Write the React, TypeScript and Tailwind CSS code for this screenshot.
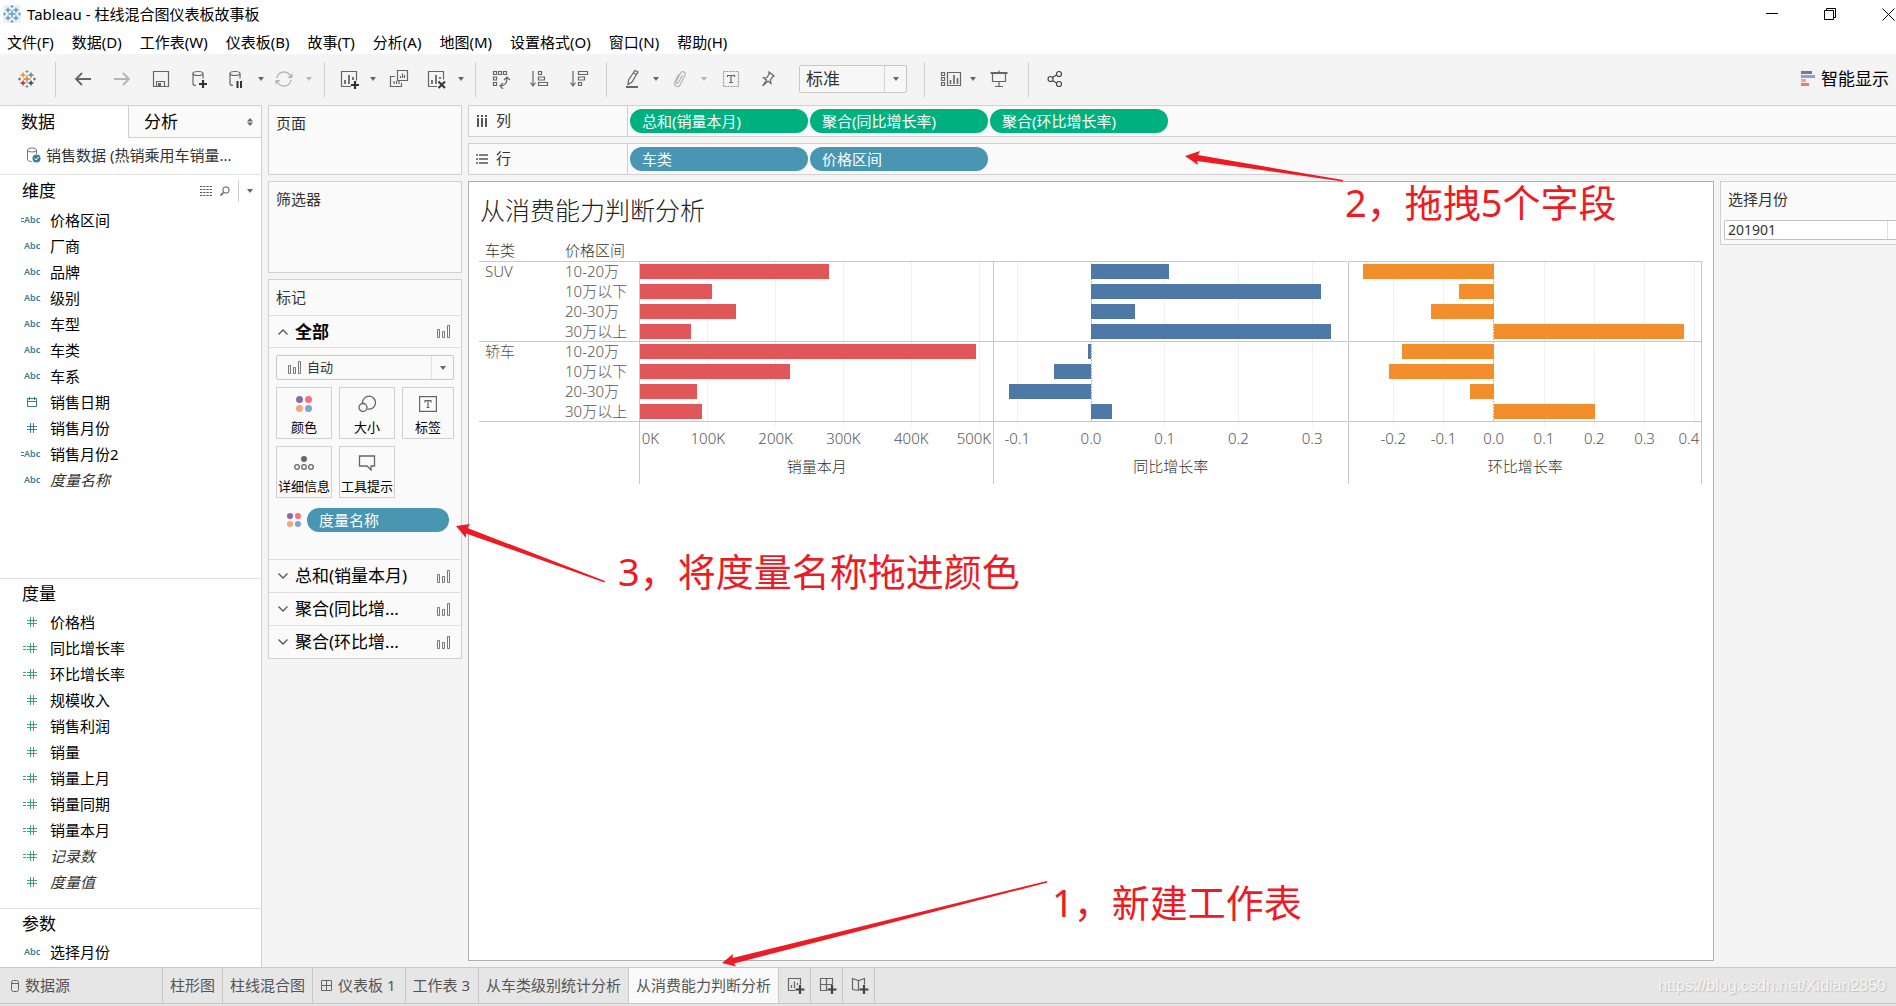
import React from "react";

type Measure = {
  title: string;
  color: string;
  min: number;
  max: number;
  ticks: { value: number; label: string; anchor?: "start" | "end" }[];
  values: number[];
  zeroLine: boolean;
};

const measures: Measure[] = [
  {
    title: "销量本月",
    color: "#e15759",
    min: 0,
    max: 521,
    zeroLine: false,
    ticks: [
      { value: 0, label: "0K", anchor: "start" },
      { value: 100, label: "100K" },
      { value: 200, label: "200K" },
      { value: 300, label: "300K" },
      { value: 400, label: "400K" },
      { value: 500, label: "500K", anchor: "end" },
    ],
    values: [278, 106, 141, 75, 495, 221, 84, 91],
  },
  {
    title: "同比增长率",
    color: "#4e79a7",
    min: -0.1316,
    max: 0.3477,
    zeroLine: true,
    ticks: [
      { value: -0.1, label: "-0.1" },
      { value: 0, label: "0.0" },
      { value: 0.1, label: "0.1" },
      { value: 0.2, label: "0.2" },
      { value: 0.3, label: "0.3" },
    ],
    values: [0.106, 0.312, 0.0597, 0.3257, -0.0041, -0.0502, -0.1113, 0.0285],
  },
  {
    title: "环比增长率",
    color: "#f28e2b",
    min: -0.288,
    max: 0.413,
    zeroLine: true,
    ticks: [
      { value: -0.2, label: "-0.2" },
      { value: -0.1, label: "-0.1" },
      { value: 0, label: "0.0" },
      { value: 0.1, label: "0.1" },
      { value: 0.2, label: "0.2" },
      { value: 0.3, label: "0.3" },
      { value: 0.4, label: "0.4", anchor: "end" },
    ],
    values: [-0.2605, -0.07, -0.1255, 0.3785, -0.183, -0.209, -0.0482, 0.202],
  },
];

const groups = [
  { name: "SUV", rows: ["10-20万", "10万以下", "20-30万", "30万以上"] },
  { name: "轿车", rows: ["10-20万", "10万以下", "20-30万", "30万以上"] },
];

function BarPanel({ m }: { m: Measure }) {
  const pct = (v: number) => ((v - m.min) / (m.max - m.min)) * 100;
  const zero = pct(0);
  return (
    <svg className="block h-[223px] w-full overflow-visible" role="img" aria-label={m.title}>
      <g shapeRendering="crispEdges">
        {m.ticks
          .filter((t) => t.value !== 0)
          .map((t) => (
            <line key={t.label} x1={`${pct(t.value)}%`} x2={`${pct(t.value)}%`} y1="0" y2="165" stroke="#f0f0f0" />
          ))}
        {m.zeroLine && (
          <line x1={`${zero}%`} x2={`${zero}%`} y1="2" y2="160" stroke="#b8b8b8" strokeDasharray="2 1" />
        )}
        {[0, 80, 160].map((y) => (
          <rect key={y} x="0" y={y} width="100%" height="1" fill="#c8c8c8" />
        ))}
        {m.values.map((v, i) => (
          <rect
            key={i}
            x={`${Math.min(zero, pct(v))}%`}
            y={3 + i * 20}
            width={`${Math.abs(pct(v) - zero)}%`}
            height="15"
            fill={m.color}
          />
        ))}
      </g>
      <g fontSize="15" fill="#555">
        {m.ticks.map((t) => (
          <text
            key={t.label}
            x={t.anchor === "start" ? "0.5%" : t.anchor === "end" ? "99.4%" : `${pct(t.value)}%`}
            y="183"
            textAnchor={t.anchor ?? "middle"}
          >
            {t.label}
          </text>
        ))}
        <text x="50%" y="211" textAnchor="middle" fill="#333">
          {m.title}
        </text>
      </g>
    </svg>
  );
}

function TableauMark({ mono = false }: { mono?: boolean }) {
  const c = (s: string) => (mono ? "#5b9bc0" : s);
  return (
    <svg width="18" height="18" viewBox="0 0 18 18" fill="none" strokeWidth="1.4" aria-hidden="true">
      {mono && <path d="M0 0h18v18H0z" fill="#eef1f3" />}
      <path d="M9 5.5v7M5.5 9h7" stroke={c("#e8762d")} />
      <path d="M5 2.5v5M2.5 5h5" stroke={c("#eb9129")} />
      <path d="M13 2.5v5M10.500 5h5" stroke={c("#59879b")} />
      <path d="M5 10.500v5M2.500 13h5" stroke={c("#c72037")} />
      <path d="M13 10.500v5M10.500 13h5" stroke={c("#1f457e")} />
      <path d="M9 0v3M7.500 1.500h3M9 15v3M7.500 16.500h3" stroke={c("#7199a6")} strokeWidth="1" />
      <path d="M1.500 7.500v3M0 9h3M16.500 7.500v3M15 9h3" stroke={c("#5b6591")} strokeWidth="1" />
    </svg>
  );
}

function Caret({ light = false }: { light?: boolean }) {
  return (
    <svg width="6" height="4" viewBox="0 0 6 4" aria-hidden="true">
      <path d="M0 0h6L3 4z" fill={light ? "#b5b5b5" : "#666"} />
    </svg>
  );
}

function ToolButton({ label, className, children }: { label: string; className: string; children: React.ReactNode }) {
  return (
    <button type="button" aria-label={label} className={"flex h-9 shrink-0 items-center justify-center " + className}>
      {children}
    </button>
  );
}

function Sep() {
  return <div className="mx-[7px] h-[35px] w-px shrink-0 bg-[#cfcfcf]" />;
}

function I({ children, w = 20, color = "#666" }: { children: React.ReactNode; w?: number; color?: string }) {
  return (
    <svg width={w} height="20" viewBox={`0 0 ${w} 20`} fill="none" stroke={color} strokeWidth="1.2" aria-hidden="true">
      {children}
    </svg>
  );
}

function Toolbar() {
  return (
    <div className="flex h-[51px] items-center bg-[#f4f4f4] pb-px">
      <ToolButton label="起始页" className="w-12 pl-[6px]">
        <TableauMark />
      </ToolButton>
      <Sep />
      <ToolButton label="后退" className="w-[39px]">
        <I>
          <path d="M18 10H3M9 4l-6 6 6 6" strokeWidth="1.800" />
        </I>
      </ToolButton>
      <ToolButton label="前进" className="w-[39px]">
        <I color="#b5b5b5">
          <path d="M2 10h15M11 4l6 6-6 6" strokeWidth="1.800" />
        </I>
      </ToolButton>
      <ToolButton label="保存" className="w-[39px]">
        <I>
          <path d="M2.500 2.500h15v15h-15zM5.500 17.500v-5h8v5" />
          <path d="M7 14h3v3H7z" fill="#666" stroke="none" />
        </I>
      </ToolButton>
      <ToolButton label="新建数据源" className="w-10">
        <I>
          <ellipse cx="8" cy="4.500" rx="5" ry="2" />
          <path d="M3 4.500v10c0 1 1 2 3 2M13 4.500v5" />
          <path d="M13 11v8M9 15h8" stroke="#333" strokeWidth="2.200" />
        </I>
      </ToolButton>
      <ToolButton label="暂停自动更新" className="w-[34px]">
        <I>
          <ellipse cx="8" cy="4.500" rx="5" ry="2" />
          <path d="M3 4.500v10c0 1 1 2 3 2M13 4.500v5" />
          <path d="M10.500 12v7M14 12v7" stroke="#333" strokeWidth="2" />
        </I>
      </ToolButton>
      <ToolButton label="更新选项" className="w-[14px]">
        <Caret />
      </ToolButton>
      <ToolButton label="刷新" className="w-8">
        <I color="#b5b5b5">
          <path d="M3 9a7 7 0 0 1 13-2.500M17 11a7 7 0 0 1-13 2.500" strokeWidth="1.400" />
          <path d="M18.500 4v5h-5zM1.500 16v-5h5z" fill="#b5b5b5" stroke="none" />
        </I>
      </ToolButton>
      <ToolButton label="刷新选项" className="w-[17px]">
        <Caret light />
      </ToolButton>
      <Sep />
      <ToolButton label="新建工作表" className="w-[34px]">
        <I>
          <path d="M12 17.500H2.500v-15h15v9" />
          <path d="M6 15v-4M10 15V6M14 11V8" strokeWidth="1.800" />
          <path d="M16 12v8M12 16h8" stroke="#333" strokeWidth="2.200" />
        </I>
      </ToolButton>
      <ToolButton label="新建选项" className="w-[14px]">
        <Caret />
      </ToolButton>
      <ToolButton label="复制" className="w-[38px]">
        <I>
          <path d="M8.500 1.500h10v10h-10zM6 7.500H1.500v10h11V14M11.500 9V7M13.500 9V4.500M15.500 9V6M5 15v-3M7.500 15v-3M10 15v-3" />
        </I>
      </ToolButton>
      <ToolButton label="清除" className="w-9">
        <I>
          <path d="M11 17.500H2.500v-15h15v8" />
          <path d="M6 15v-4M10 15V6M14 10V8" strokeWidth="1.800" />
          <path d="M12.500 12.500l6.500 6.500M19 12.500L12.500 19" stroke="#333" strokeWidth="2" />
        </I>
      </ToolButton>
      <ToolButton label="清除选项" className="w-[14px]">
        <Caret />
      </ToolButton>
      <Sep />
      <ToolButton label="交换行和列" className="w-9">
        <I>
          <path d="M2.500 2.500h3v3h-3zM7.500 2.500h3v3h-3zM12.500 2.500h3v3h-3zM2.500 8h3v3h-3zM2.500 13.500h3v3h-3zM9 17c5 0 7-3 7-8M12 14l-3 3 3 3M13 11l3-3 3 3" />
        </I>
      </ToolButton>
      <ToolButton label="升序排序" className="w-10">
        <I>
          <path d="M4 2v14M1.500 13.500L4 17l2.500-3.500" />
          <path d="M9.500 2.500h3v3h-3zM9.500 8h6v3h-6zM9.500 13.500h9v3h-9z" />
        </I>
      </ToolButton>
      <ToolButton label="降序排序" className="w-10">
        <I>
          <path d="M4 2v14M1.500 13.500L4 17l2.500-3.500" />
          <path d="M9.500 2.500h9v3h-9zM9.500 8h6v3h-6zM9.500 13.500h3v3h-3z" />
        </I>
      </ToolButton>
      <Sep />
      <ToolButton label="突出显示" className="ml-px w-[34px]">
        <I>
          <path d="M13 1.500l3 1.500-6 10-4 2.500.500-4.500zM11.500 4l3 1.500" />
          <path d="M4 18h12" strokeWidth="2" />
        </I>
      </ToolButton>
      <ToolButton label="突出显示选项" className="w-[14px]">
        <Caret />
      </ToolButton>
      <ToolButton label="组成员" className="w-[34px]">
        <I color="#b5b5b5">
          <path d="M12.500 6l-4 7.500c-.8 1.500-3 .500-2.200-1.200L10.500 4c1.300-2.600 5.700-1 4.500 2l-5 10c-1.700 3-6.500 1-5.300-2.500L8.500 5.500" />
        </I>
      </ToolButton>
      <ToolButton label="组选项" className="w-[14px]">
        <Caret light />
      </ToolButton>
      <ToolButton label="显示标记标签" className="w-10">
        <I>
          <path d="M2.500 2.500h15v15h-15z" strokeDasharray="2 1" stroke="#999" />
          <path d="M6.500 8V6.500h7V8M10 6.500v7M8 13.500h4" />
        </I>
      </ToolButton>
      <ToolButton label="固定轴" className="w-[34px]">
        <I>
          <path d="M11 3l5 4-1.500 1-2 3 .500 3.500-3-2.500-5.500 5 4-6L5.500 9l3.500-.500L11 5z" />
        </I>
      </ToolButton>
      <div className="relative ml-[14px] mr-[10px] w-[108px] shrink-0">
        <select
          aria-label="适合"
          className="block h-7 w-full appearance-none rounded-[2px] border border-[#c8c8c8] bg-[#f7f7f7] pl-[6px] text-[17px] text-[#333]"
        >
          <option>标准</option>
        </select>
        <div className="pointer-events-none absolute inset-y-px right-px flex w-[22px] items-center justify-center border-l border-[#d4d4d4]">
          <Caret />
        </div>
      </div>
      <Sep />
      <ToolButton label="显示卡" className="w-[37px]">
        <I w={22}>
          <path d="M1.500 3.500h3v3h-3zM1.500 8.500h3v3h-3zM1.500 13.500h3v3h-3zM7.500 3.500h13v13h-13z" />
          <path d="M10.500 15v-4M14 15V6M17.500 15V9" strokeWidth="1.600" />
        </I>
      </ToolButton>
      <ToolButton label="卡选项" className="w-2">
        <Caret />
      </ToolButton>
      <ToolButton label="演示模式" className="w-[44px]">
        <I>
          <path d="M3.500 4v8.500h13V4M10 12.500V17M6 17.500h8M10 1.500V4" />
          <path d="M1.500 4h17" strokeWidth="2" />
        </I>
      </ToolButton>
      <Sep />
      <ToolButton label="共享" className="w-[38px]">
        <I color="#444">
          <circle cx="5.500" cy="10" r="2.500" />
          <circle cx="14" cy="5" r="2.500" />
          <circle cx="14" cy="15" r="2.500" />
          <path d="M7.500 8.500l4-2.500M7.500 11.500l4 2.500" />
        </I>
      </ToolButton>
      <button type="button" className="ml-auto mr-[7px] flex items-center gap-[6px] text-[17px] text-black">
        <svg width="14" height="16" viewBox="0 0 14 16" aria-hidden="true">
          <path d="M0 0h11v3H0z" fill="#8a6d9a" />
          <path d="M0 4h14v3H0z" fill="#7fa5d0" />
          <path d="M0 8h5v3H0z" fill="#f4a67c" />
          <path d="M0 12h8v3H0z" fill="#fb6f80" />
        </svg>
        智能显示
      </button>
    </div>
  );
}

type Kind = "abc" | "date" | "num";
type Field = { name: string; kind: Kind; calc?: boolean; italic?: boolean };

const dimensions: Field[] = [
  { name: "价格区间", kind: "abc", calc: true },
  { name: "厂商", kind: "abc" },
  { name: "品牌", kind: "abc" },
  { name: "级别", kind: "abc" },
  { name: "车型", kind: "abc" },
  { name: "车类", kind: "abc" },
  { name: "车系", kind: "abc" },
  { name: "销售日期", kind: "date" },
  { name: "销售月份", kind: "num" },
  { name: "销售月份2", kind: "abc", calc: true },
  { name: "度量名称", kind: "abc", italic: true },
];

const measureFields: Field[] = [
  { name: "价格档", kind: "num" },
  { name: "同比增长率", kind: "num", calc: true },
  { name: "环比增长率", kind: "num", calc: true },
  { name: "规模收入", kind: "num" },
  { name: "销售利润", kind: "num" },
  { name: "销量", kind: "num" },
  { name: "销量上月", kind: "num", calc: true },
  { name: "销量同期", kind: "num", calc: true },
  { name: "销量本月", kind: "num", calc: true },
  { name: "记录数", kind: "num", calc: true, italic: true },
  { name: "度量值", kind: "num", italic: true },
];

function FieldList({ fields, green = false }: { fields: Field[]; green?: boolean }) {
  return (
    <ul>
      {fields.map((f) => (
        <li key={f.name} className="flex h-[26px] items-center">
          <span
            className={
              "flex w-[50px] shrink-0 items-center pr-[9px] " + (green ? "text-[#3fa37c]" : "text-[#3a7c9c]")
            }
          >
            <span className={"flex justify-end " + (f.kind === "abc" ? "w-6" : "w-[26px]")}>
              {f.calc && (
                <svg width="3" height="4" viewBox="0 0 3 4" aria-hidden="true">
                  <path d="M0 .5h3M0 3.500h3" stroke="currentColor" />
                </svg>
              )}
            </span>
            {f.kind === "abc" && <span className="text-[9px] font-semibold">Abc</span>}
            {f.kind === "num" && (
              <svg width="11" height="12" viewBox="0 0 11 12" aria-hidden="true">
                <path d="M4.500 1v10M7.500 1v10M1 4.500h10M1 7.500h10" stroke="currentColor" />
              </svg>
            )}
            {f.kind === "date" && (
              <svg width="11" height="10" viewBox="0 0 11 10" aria-hidden="true">
                <path d="M1.500 1.500h9v8h-9zM1.500 4.500h9M3.500 0v3M8.500 0v3" fill="none" stroke="currentColor" />
              </svg>
            )}
          </span>
          <span className={f.italic ? "text-[15px] italic text-[#333]" : "text-[15px] text-black"}>{f.name}</span>
        </li>
      ))}
    </ul>
  );
}

function DataPane() {
  return (
    <aside className="flex w-[262px] shrink-0 flex-col border-r border-t border-[#d0d0d0] bg-white">
      <div className="flex h-8 text-[17px] text-black">
        <button type="button" className="w-32 pl-[21px] text-left">
          数据
        </button>
        <button
          type="button"
          className="flex flex-1 items-center justify-between border-b border-l border-[#d0d0d0] bg-[#fafafa] pl-[15px] pr-2"
        >
          分析
          <svg width="6" height="8" viewBox="0 0 6 8" aria-hidden="true">
            <path d="M0 3.500h6L3 0zM0 4.500h6L3 8z" fill="#666" />
          </svg>
        </button>
      </div>
      <div className="flex h-[37px] items-center gap-[5px] border-b border-[#e0e0e0] pb-[2px] pl-[26px] text-[15px] text-[#333]">
        <svg width="15" height="16" viewBox="0 0 15 16" fill="none" aria-hidden="true">
          <ellipse cx="6" cy="3" rx="4.500" ry="2" stroke="#777" />
          <path d="M1.500 3v9.500c0 1 1.500 2 4 2M10.500 3v4" stroke="#777" />
          <circle cx="10.500" cy="11.500" r="4" fill="#3a7fa0" />
          <path d="M8.500 11.500l1.500 1.500 2.500-3" stroke="#fff" />
        </svg>
        销售数据 (热销乘用车销量...
      </div>
      <section className="flex-1 border-b border-[#e0e0e0]">
        <div className="flex h-8 items-center pl-[22px] pr-2">
          <h2 className="flex-1 text-[17px] text-black">维度</h2>
          <button type="button" aria-label="查看数据" className="mr-2">
            <svg width="12" height="10" viewBox="0 0 12 10" aria-hidden="true">
              <path d="M0 .5h12M0 3.500h12M0 6.500h12M0 9.500h12" stroke="#555" strokeDasharray="2.250 1" />
            </svg>
          </button>
          <button type="button" aria-label="查找字段" className="mr-2">
            <svg width="10" height="10" viewBox="0 0 10 10" fill="none" stroke="#555" aria-hidden="true">
              <circle cx="6" cy="4" r="3.200" />
              <path d="M3.500 6.500L.5 9.500" strokeWidth="1.500" />
            </svg>
          </button>
          <div className="mr-2 h-[22px] w-px bg-[#d0d0d0]" />
          <button type="button" aria-label="维度菜单" className="py-1">
            <Caret />
          </button>
        </div>
        <FieldList fields={dimensions} />
      </section>
      <section className="border-b border-[#e0e0e0] pb-[13px]">
        <h2 className="flex h-[30px] items-center pl-[22px] text-[17px] text-black">度量</h2>
        <FieldList fields={measureFields} green />
      </section>
      <section className="pb-[2px]">
        <h2 className="flex h-[30px] items-center pl-[22px] text-[17px] text-black">参数</h2>
        <FieldList fields={[{ name: "选择月份", kind: "abc" }]} />
      </section>
    </aside>
  );
}

function BarsIcon() {
  return (
    <svg width="14" height="13" viewBox="0 0 14 13" fill="none" stroke="#777" aria-hidden="true">
      <path d="M.5 4.500h2v8h-2zM5.500 6.500h2v6h-2zM10.500 .5h2v12h-2z" />
    </svg>
  );
}

function Dots({ size = 16 }: { size?: number }) {
  return (
    <svg width={size} height={size} viewBox="0 0 16 16" aria-hidden="true">
      <circle cx="3.500" cy="3.500" r="3.500" fill="#8a6d9a" />
      <circle cx="12.500" cy="3.500" r="3.500" fill="#fb6f80" />
      <circle cx="3.500" cy="12.500" r="3.500" fill="#f4a67c" />
      <circle cx="12.500" cy="12.500" r="3.500" fill="#7fa5d0" />
    </svg>
  );
}

function MarkButton({ label, narrow = false, children }: { label: string; narrow?: boolean; children: React.ReactNode }) {
  return (
    <button
      type="button"
      className={
        "flex h-[52px] flex-col items-center justify-between whitespace-nowrap border border-[#d0d0d0] bg-[#fafafa] pb-px pt-[6px] text-[13px] leading-[20px] text-black " +
        (narrow ? "w-[52px]" : "w-14")
      }
    >
      <span className="flex h-5 items-center">{children}</span>
      {label}
    </button>
  );
}

function MarksColumn() {
  return (
    <div className="ml-[6px] flex w-[194px] shrink-0 flex-col gap-[6px] text-[15px] text-[#333]">
      <section className="h-[70px] border border-[#d0d0d0] bg-[#fafafa] pl-[7px]">
        <h2 className="flex h-9 items-center pb-[2px]">页面</h2>
      </section>
      <section className="h-[92px] border border-[#d0d0d0] bg-[#fafafa] pl-[7px]">
        <h2 className="flex h-9 items-center pb-[2px]">筛选器</h2>
      </section>
      <section className="border border-[#d0d0d0] bg-[#fafafa]">
        <h2 className="flex h-9 items-center border-b border-[#e0e0e0] pb-px pl-[7px]">标记</h2>
        <button
          type="button"
          className="flex h-8 w-full items-center border-b border-[#e0e0e0] pl-[9px] pr-[10px] text-[17px] font-bold text-black"
        >
          <svg width="10" height="6" viewBox="0 0 10 6" fill="none" stroke="#555" strokeWidth="1.300" aria-hidden="true">
            <path d="M.5 5.500L5 1l4.500 4.500" />
          </svg>
          <span className="flex-1 pl-[7px] text-left">全部</span>
          <BarsIcon />
        </button>
        <div className="px-[7px] pb-[27px] pt-[7px]">
          <div className="relative w-[178px]">
            <select
              aria-label="标记类型"
              className="block h-[25px] w-full appearance-none rounded-[2px] border border-[#c8c8c8] bg-[#fafafa] pl-[30px] text-[13px] text-[#333]"
            >
              <option>自动</option>
            </select>
            <div className="pointer-events-none absolute inset-y-px left-3 flex items-center">
              <BarsIcon />
            </div>
            <div className="pointer-events-none absolute inset-y-px right-px flex w-[22px] items-center justify-center border-l border-[#e0e0e0]">
              <Caret />
            </div>
          </div>
          <div className="mt-[7px] flex flex-wrap gap-[7px]">
            <MarkButton label="颜色">
              <Dots />
            </MarkButton>
            <MarkButton label="大小">
              <svg width="18" height="18" viewBox="0 0 18 18" fill="none" stroke="#666" strokeWidth="1.300" aria-hidden="true">
                <path d="M4.500 8a6.500 6.500 0 1 1 5 6" />
                <circle cx="5" cy="12.500" r="4" />
              </svg>
            </MarkButton>
            <MarkButton label="标签" narrow>
              <svg width="18" height="16" viewBox="0 0 18 16" fill="none" stroke="#666" strokeWidth="1.200" aria-hidden="true">
                <path d="M.6 .6h16.800v14.800H.6zM6 6.500V4.600h6v1.900M9 4.600v7M7.500 11.500h3" />
              </svg>
            </MarkButton>
            <MarkButton label="详细信息">
              <svg width="20" height="16" viewBox="0 0 20 16" fill="none" stroke="#666" strokeWidth="1.300" aria-hidden="true">
                <circle cx="10" cy="4" r="3" fill="#666" stroke="none" />
                <circle cx="3" cy="12" r="2.300" />
                <circle cx="10" cy="12" r="2.300" />
                <circle cx="17" cy="12" r="2.300" />
              </svg>
            </MarkButton>
            <MarkButton label="工具提示">
              <svg width="18" height="16" viewBox="0 0 18 16" fill="none" stroke="#666" strokeWidth="1.300" aria-hidden="true">
                <path d="M1.500 1h15v10h-3.500v4L9 11H1.500z" />
              </svg>
            </MarkButton>
          </div>
          <div className="mt-[10px] flex items-center gap-[6px] pl-[11px]">
            <Dots size={14} />
            <button type="button" className="h-6 w-[142px] rounded-full bg-[#4996b2] pl-3 text-left text-white">
              度量名称
            </button>
          </div>
        </div>
        {["总和(销量本月)", "聚合(同比增...", "聚合(环比增..."].map((t) => (
          <button
            key={t}
            type="button"
            className="flex h-[33px] w-full items-center border-t border-[#e0e0e0] pl-[9px] pr-[10px] text-[17px] text-black"
          >
            <svg width="10" height="6" viewBox="0 0 10 6" fill="none" stroke="#555" strokeWidth="1.300" aria-hidden="true">
              <path d="M.5 .5L5 5 9.500 .5" />
            </svg>
            <span className="flex-1 pl-[7px] text-left">{t}</span>
            <BarsIcon />
          </button>
        ))}
      </section>
    </div>
  );
}

function Shelf({ label, icon, children }: { label: string; icon: React.ReactNode; children: React.ReactNode }) {
  return (
    <div className="flex h-8 border-y border-l border-[#d0d0d0] bg-[#fafafa] text-[15px]">
      <div className="flex w-[159px] shrink-0 items-center gap-2 border-r border-[#d0d0d0] pb-px pl-[7px] text-[#333]">
        {icon}
        {label}
      </div>
      <div className="flex items-center gap-[2px] pl-[2px]">{children}</div>
    </div>
  );
}

function Pill({ text, green = false }: { text: string; green?: boolean }) {
  return (
    <button
      type="button"
      className={"h-6 w-[178px] rounded-full pl-3 text-left text-white " + (green ? "bg-[#00b180]" : "bg-[#4996b2]")}
    >
      {text}
    </button>
  );
}

function Sheet() {
  return (
    <main className="min-w-0 flex-1 border border-[#b0b0b0] bg-white pl-[10px] pr-[11px]">
      <h1 className="flex h-[58px] items-center pl-px text-[25px] font-light text-[#222]">从消费能力判断分析</h1>
      <div className="font-light">
        <div className="flex h-[21px] items-center pl-[6px] text-[15px] leading-none text-[#333]">
          <span className="w-20">车类</span>
          <span>价格区间</span>
        </div>
        <div className="grid grid-cols-[160px_1fr_1fr_1fr]">
          <div>
            {groups.map((g) => (
              <div key={g.name} className="flex h-20 border-t border-[#c8c8c8] pl-[6px] text-[15px] leading-[18px] text-[#555]">
                <span className="w-20">{g.name}</span>
                <ul>
                  {g.rows.map((r) => (
                    <li key={r} className="h-5 whitespace-nowrap">
                      {r}
                    </li>
                  ))}
                </ul>
              </div>
            ))}
            <div className="border-t border-[#c8c8c8]" />
          </div>
          {measures.map((m) => (
            <div key={m.title} className="border-l border-[#c8c8c8] last:border-r">
              <BarPanel m={m} />
            </div>
          ))}
        </div>
      </div>
    </main>
  );
}

function BottomTabs() {
  const tab = "flex items-center border-r border-[#c8c8c8] ";
  const add = <path d="M15 9v9M10.500 13.500h9" stroke="#444" strokeWidth="2.200" />;
  return (
    <footer className="flex h-[39px] shrink-0 border-t border-[#c8c8c8] bg-[#e6e6e6] pb-[2px]">
      <nav className="flex flex-1 border-b border-[#c8c8c8] text-[15px] text-[#555]" aria-label="工作表">
        <button type="button" className={tab + "w-[163px] gap-[6px] pl-[11px]"}>
          <svg width="8" height="12" viewBox="0 0 8 12" fill="none" stroke="#666" aria-hidden="true">
            <rect x=".5" y=".5" width="7" height="11" rx="2" />
            <path d="M.5 3.500h7" />
          </svg>
          数据源
        </button>
        <button type="button" className={tab + "px-[7px]"}>柱形图</button>
        <button type="button" className={tab + "px-[7px]"}>柱线混合图</button>
        <button type="button" className={tab + "gap-[6px] pl-2 pr-[9px]"}>
          <svg width="11" height="11" viewBox="0 0 11 11" fill="none" stroke="#666" aria-hidden="true">
            <path d="M.5 .5h10v10H.5zM5.500 .5v10M.5 5.500h10" />
          </svg>
          仪表板 1
        </button>
        <button type="button" className={tab + "pl-[7px] pr-2"}>工作表 3</button>
        <button type="button" className={tab + "px-[7px]"}>从车类级别统计分析</button>
        <button type="button" aria-current="page" className={tab + "bg-[#fafafa] px-[7px]"}>从消费能力判断分析</button>
        <button type="button" aria-label="新建工作表" className={tab + "w-8 justify-center"}>
          <I>
            <path d="M10 14.500H3.500v-12h12v6M6.500 12V9M9.500 12V5.500M12.500 9V7" />
            {add}
          </I>
        </button>
        <button type="button" aria-label="新建仪表板" className={tab + "w-8 justify-center"}>
          <I>
            <path d="M10 14.500H3.500v-12h12v6M9.500 2.500v12M3.500 8.500h12" />
            {add}
          </I>
        </button>
        <button type="button" aria-label="新建故事" className={tab + "w-8 justify-center"}>
          <I>
            <path d="M10 14.500l-6.500-1V2.500l6 2 6-2v6M9.500 4.500v10" />
            {add}
          </I>
        </button>
        <span className="ml-auto flex items-center pr-[10px] font-['Liberation_Sans'] text-[16px] text-[#f4f4f4] [text-shadow:1px_1px_1px_#bdbdbd]">
          https://blog.csdn.net/Xidian2850
        </span>
      </nav>
    </footer>
  );
}

function Annotations() {
  return (
    <div className="pointer-events-none absolute inset-0 overflow-hidden text-[38px] leading-[48px] whitespace-nowrap text-[#ed1c24]">
      <svg className="absolute left-0 top-0" width="1400" height="980" viewBox="0 0 1400 980" fill="#ed1c24" aria-hidden="true">
        <path d="M1185 156L1200 151L1198 155L1343 180L1343 181.500L1197 161L1198 165z" />
        <path d="M456 526L470 524L467.500 528L605 581L604.500 582.500L466 533.500L466 538z" />
        <path d="M722 963L733 954L732.500 958L1047 881L1047.500 882.500L734 963.500L736 966.500z" />
      </svg>
      <p className="absolute left-[1345px] top-[178px]">2，拖拽5个字段</p>
      <p className="absolute left-[618px] top-[547px]">3，将度量名称拖进颜色</p>
      <p className="absolute left-[1052px] top-[878px]">1，新建工作表</p>
    </div>
  );
}

const menus = ["文件(F)", "数据(D)", "工作表(W)", "仪表板(B)", "故事(T)", "分析(A)", "地图(M)", "设置格式(O)", "窗口(N)", "帮助(H)"];

export default function App() {
  return (
    <div className="relative flex min-h-screen flex-col overflow-hidden bg-[#f4f4f4] font-['Noto_Sans','Noto_Sans_CJK_SC',sans-serif]">
      <header className="bg-white text-[15px] text-black">
        <div className="flex h-[30px] items-center pb-[2px] pl-[3px]">
          <TableauMark mono />
          <span className="pl-[6px]">Tableau - 柱线混合图仪表板故事板</span>
          <div className="ml-auto flex gap-[45px] pr-px">
            <button type="button" aria-label="最小化">
              <svg width="13" height="13" viewBox="0 0 13 13" stroke="#000" aria-hidden="true">
                <path d="M0 5.500h12" />
              </svg>
            </button>
            <button type="button" aria-label="还原">
              <svg width="13" height="13" viewBox="0 0 13 13" fill="none" stroke="#000" aria-hidden="true">
                <path d="M.5 2.500h9v9h-9zM2.500 2.500v-2h9v9h-2" />
              </svg>
            </button>
            <button type="button" aria-label="关闭">
              <svg width="13" height="13" viewBox="0 0 13 13" stroke="#000" aria-hidden="true">
                <path d="M.5 .5l12 12M12.500 .5l-12 12" />
              </svg>
            </button>
          </div>
        </div>
        <nav className="flex h-6 items-center gap-[18px] pl-[7px]" aria-label="菜单">
          {menus.map((m) => (
            <button key={m} type="button">
              {m}
            </button>
          ))}
        </nav>
      </header>
      <Toolbar />
      <div className="flex flex-1">
        <DataPane />
        <MarksColumn />
        <div className="ml-[6px] flex min-w-0 flex-1 flex-col gap-[6px] pb-[6px]">
          <Shelf
            label="列"
            icon={
              <svg width="12" height="12" viewBox="0 0 12 12" aria-hidden="true">
                <path d="M2 0v2M6 0v2M10 0v2M2 3v9M6 3v9M10 3v9" stroke="#555" strokeWidth="2" />
              </svg>
            }
          >
            <Pill green text="总和(销量本月)" />
            <Pill green text="聚合(同比增长率)" />
            <Pill green text="聚合(环比增长率)" />
          </Shelf>
          <Shelf
            label="行"
            icon={
              <svg width="12" height="12" viewBox="0 0 12 12" aria-hidden="true">
                <path d="M0 2h2M0 6h2M0 10h2M3 2h9M3 6h9M3 10h9" stroke="#555" strokeWidth="1.600" />
              </svg>
            }
          >
            <Pill text="车类" />
            <Pill text="价格区间" />
          </Shelf>
          <div className="flex min-h-0 flex-1">
            <Sheet />
            <aside className="ml-[6px] w-44 shrink-0 overflow-hidden">
              <div className="h-16 w-[194px] border border-[#d0d0d0] bg-[#fafafa] px-[3px] text-[#333]">
                <label htmlFor="month" className="flex h-[38px] items-center pb-1 pl-1 text-[15px]">
                  选择月份
                </label>
                <div className="relative">
                  <select
                    id="month"
                    className="block h-5 w-full appearance-none rounded-[2px] border border-[#c0c0c0] bg-white pl-[3px] text-[14px] leading-none"
                  >
                    <option>201901</option>
                  </select>
                  <div className="pointer-events-none absolute inset-y-px right-px flex w-[22px] items-center justify-center border-l border-[#e0e0e0]">
                    <Caret />
                  </div>
                </div>
              </div>
            </aside>
          </div>
        </div>
      </div>
      <BottomTabs />
      <Annotations />
    </div>
  );
}
